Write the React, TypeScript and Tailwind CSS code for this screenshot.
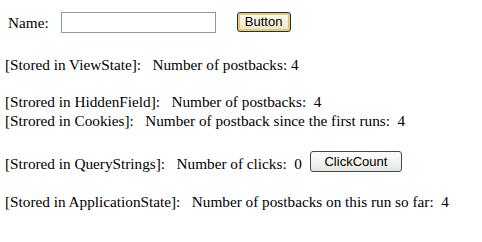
import React from "react";

const serif = { fontFamily: '"Liberation Serif", "Times New Roman", serif' };

export default function App() {
  return (
    <div className="w-[482px] h-[242px] bg-white text-black text-[15.25px] leading-[19px] overflow-hidden" style={serif}>
      <div className="flex items-center h-[21px] mt-[12px]">
        <span className="ml-[8px]">Name:</span>
        <div className="ml-[12px] w-[155px] h-[21px] border border-[#7f9db9] bg-white" />
        <button
          className="ml-[21px] -mt-[2px] w-[54px] h-[20px] rounded-[3px] border border-[#003c74] text-[13px] leading-none text-black bg-gradient-to-b from-[#fffdf4] to-[#ece3c8] shadow-[inset_0_0_0_2px_#f8c45a]"
          style={{ fontFamily: '"Liberation Sans", Arial, sans-serif' }}
        >
          Button
        </button>
      </div>
      <div className="ml-[5px] mt-[22px] whitespace-pre">[Stored in ViewState]:   Number of postbacks: 4</div>
      <div className="ml-[5px] mt-[18px] whitespace-pre">[Strored in HiddenField]:   Number of postbacks:  4</div>
      <div className="ml-[5px] whitespace-pre">[Strored in Cookies]:   Number of postback since the first runs:  4</div>
      <div className="flex items-center ml-[5px] mt-[23px] h-[20px]">
        <span className="whitespace-pre">[Strored in QueryStrings]:   Number of clicks:  0</span>
        <button
          className="ml-[8px] -mt-[4px] w-[92px] h-[21px] rounded-[3px] border border-[#3a4a5c] text-[13px] leading-none text-black bg-gradient-to-b from-[#ffffff] to-[#e6e6e0]"
          style={{ fontFamily: '"Liberation Sans", Arial, sans-serif' }}
        >
          ClickCount
        </button>
      </div>
      <div className="ml-[5px] mt-[19px] whitespace-pre">[Stored in ApplicationState]:   Number of postbacks on this run so far:  4</div>
    </div>
  );
}
